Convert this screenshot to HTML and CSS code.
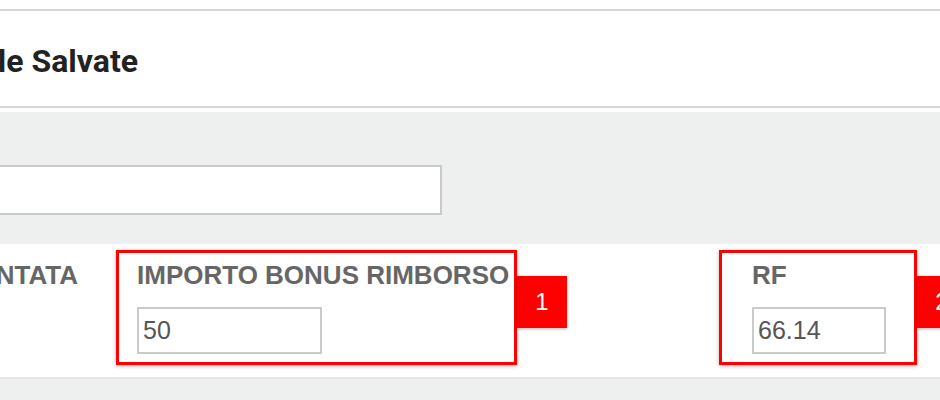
FILE: index.html
```html
<!DOCTYPE html>
<html lang="it">
<head>
    <meta charset="UTF-8">
    <title>Tabelle Salvate</title>
    <link rel="stylesheet" href="styles.css">
</head>
<body>
    <!-- Page header -->
    <div class="header">
        <div class="title-clip">
            <h1 class="title">Tabelle Salvate</h1>
        </div>
    </div>

    <!-- Filter panel -->
    <div class="filters">
        <input type="text" class="filter-input" aria-label="Cerca">
    </div>

    <!-- Amount fields -->
    <div class="fields">
        <div class="field-cut">
            <span class="label">PRESENTATA</span>
        </div>

        <div class="field field-bonus marked">
            <div class="label">IMPORTO BONUS RIMBORSO</div>
            <input type="text" class="value-input bonus-input" value="50">
            <span class="badge">1</span>
        </div>

        <div class="field field-rf marked">
            <div class="label">RF</div>
            <input type="text" class="value-input rf-input" value="66.14">
            <span class="badge">2</span>
        </div>
    </div>

    <div class="footer"></div>
</body>
</html>
```

FILE: styles.css
```css
/* General styling */
body {
    margin: 0;
    font-family: 'Liberation Sans', Arial, sans-serif;
    background-color: #ffffff;
    width: 940px;
    overflow: hidden;
}

/* Header */
.header {
    margin-top: 9px;
    height: 95px;
    border-top: 2px solid #d6d6d6;
    border-bottom: 2px solid #d6d6d6;
    display: flex;
    align-items: center;
    margin-bottom: 4px;
}

.title-clip {
    width: 138px;
    overflow: hidden;
    display: flex;
    justify-content: flex-end;
    padding-top: 5px;
}

.title {
    margin: 0;
    font-family: 'Roboto', sans-serif;
    font-weight: bold;
    font-size: 32px;
    color: #222;
    white-space: nowrap;
}

/* Filter panel */
.filters {
    background-color: #eef0ef;
    padding: 53px 0 29px 0;
}

.filter-input {
    display: block;
    box-sizing: border-box;
    margin-left: -10px;
    width: 452px;
    height: 50px;
    border: 2px solid #c9c9c9;
    background: #fff;
    outline: none;
}

/* Fields row */
.fields {
    display: flex;
    align-items: flex-start;
    padding: 6px 0 12px 0;
    border-bottom: 2px solid #e6e6e6;
}

.label {
    font-size: 26px;
    font-weight: bold;
    line-height: 30px;
    color: #666;
    white-space: nowrap;
}

.field-cut {
    width: 78px;
    padding-top: 10px;
    overflow: hidden;
    display: flex;
    justify-content: flex-end;
}

.field {
    position: relative;
    box-sizing: border-box;
    height: 115px;
    padding-top: 7px;
}

.field .label {
    margin-bottom: 17px;
}

/* Red annotation frame */
.marked {
    border: 3px solid #ff0000;
    box-shadow: 0 1px 4px rgba(0, 0, 0, 0.3);
}

.field-bonus {
    width: 401px;
    margin-left: 38px;
    padding-left: 18px;
}

.field-rf {
    width: 198px;
    margin-left: 202px;
    padding-left: 30px;
}

.value-input {
    display: block;
    box-sizing: border-box;
    height: 47px;
    padding: 0 4px;
    border: 2px solid #cacaca;
    font-family: 'Liberation Sans', Arial, sans-serif;
    font-size: 25px;
    color: #555;
    outline: none;
}

.bonus-input {
    width: 185px;
}

.rf-input {
    width: 134px;
}

.badge {
    position: absolute;
    left: calc(100% + 3px);
    top: 23px;
    width: 50px;
    height: 52px;
    background-color: #ff0000;
    color: #fff;
    font-size: 24px;
    display: flex;
    align-items: center;
    justify-content: center;
    box-shadow: 0 1px 3px rgba(0, 0, 0, 0.3);
}

.footer {
    height: 40px;
    background-color: #eef0ef;
}
```
